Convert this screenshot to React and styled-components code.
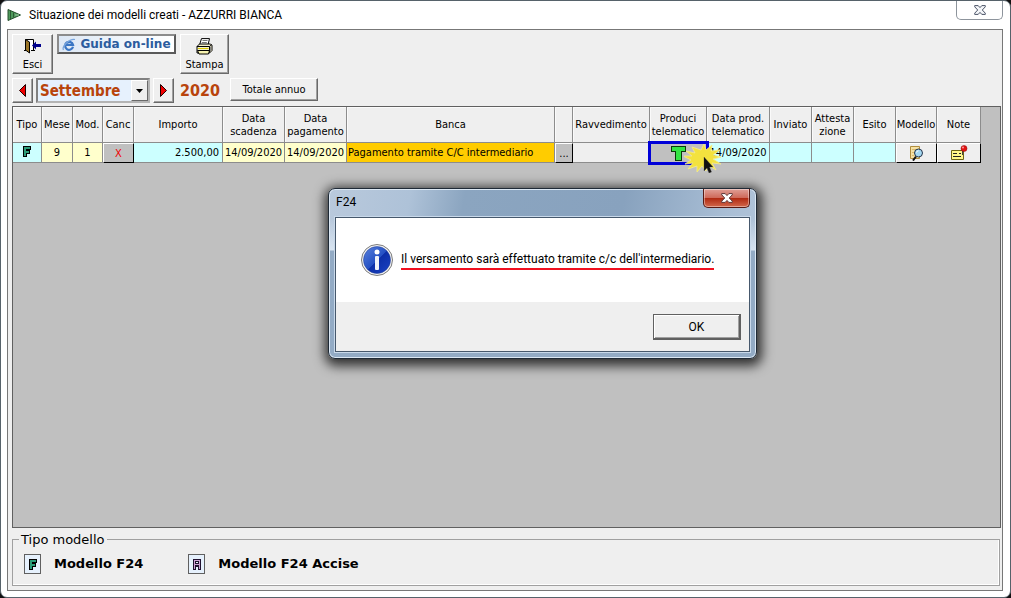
import React, { useState } from 'react';

// Styled Components
import styled, { createGlobalStyle } from 'styled-components';

const tahoma = `'DejaVu Sans Condensed', 'DejaVu Sans', sans-serif`;
const verdana = `'DejaVu Sans', sans-serif`;
const segoe = `Roboto, 'Noto Sans', sans-serif`;

const months = ['Gennaio', 'Febbraio', 'Marzo', 'Aprile', 'Maggio', 'Giugno', 'Luglio',
    'Agosto', 'Settembre', 'Ottobre', 'Novembre', 'Dicembre'];

const columns = [
    { title: 'Tipo', width: 29 },
    { title: 'Mese', width: 31 },
    { title: 'Mod.', width: 30 },
    { title: 'Canc', width: 31 },
    { title: 'Importo', width: 89 },
    { title: 'Data scadenza', width: 62 },
    { title: 'Data pagamento', width: 62 },
    { title: 'Banca', width: 208 },
    { title: '', width: 18 },
    { title: 'Ravvedimento', width: 77 },
    { title: 'Produci telematico', width: 57 },
    { title: 'Data prod. telematico', width: 63 },
    { title: 'Inviato', width: 42 },
    { title: 'Attesta zione', width: 42 },
    { title: 'Esito', width: 42 },
    { title: 'Modello', width: 41 },
    { title: 'Note', width: 44 },
];

const tableWidth = columns.reduce((sum, column) => sum + column.width, 0);

const App = () => {
    const [month, setMonth] = useState('Settembre');
    const [dialogOpen, setDialogOpen] = useState(true);

    return (
        <>
            <GlobalStyle />
            <Window>
                <TitleBar>
                    <AppIcon />
                    <h1>Situazione dei modelli creati - AZZURRI BIANCA</h1>
                    <WindowClose type="button" aria-label="Chiudi finestra">
                        <CloseIcon fill="#f4f6f9" stroke="#4a5366" />
                    </WindowClose>
                </TitleBar>
                <Content>
                    <Toolbar>
                        <ToolButton type="button" $width="41px">
                            <DoorIcon />
                            Esci
                        </ToolButton>
                        <GuideButton type="button">
                            <BrowserIcon />
                            Guida on-line
                        </GuideButton>
                        <ToolButton type="button" $width="49px">
                            <PrinterIcon />
                            Stampa
                        </ToolButton>
                    </Toolbar>
                    <Period>
                        <ArrowButton type="button" aria-label="Mese precedente">
                            <ArrowIcon points="8.5,0.5 8.5,12.5 2.5,6.5" />
                        </ArrowButton>
                        <MonthBox>
                            <select aria-label="Mese" value={month} onChange={e => setMonth(e.target.value)}>
                                {months.map(name => <option key={name}>{name}</option>)}
                            </select>
                            <DropArrow>
                                <svg width="7" height="4"><path d="M0 0h7L3.500 4z" fill="#000" /></svg>
                            </DropArrow>
                        </MonthBox>
                        <ArrowButton type="button" aria-label="Mese successivo">
                            <ArrowIcon points="2.5,0.5 2.5,12.5 8.5,6.5" />
                        </ArrowButton>
                        <Year>2020</Year>
                        <TotalButton type="button">Totale annuo</TotalButton>
                    </Period>
                    <GridPanel>
                        <ModelTable onProduce={() => setDialogOpen(true)} />
                    </GridPanel>
                    <Legend>
                        <legend>Tipo modello</legend>
                        <LegendItem>
                            <LegendBadge><LetterF /></LegendBadge>
                            Modello F24
                        </LegendItem>
                        <LegendItem>
                            <LegendBadge><LetterA /></LegendBadge>
                            Modello F24 Accise
                        </LegendItem>
                    </Legend>
                </Content>
            </Window>
            {dialogOpen && <MessageDialog onClose={() => setDialogOpen(false)} />}
        </>
    );
}

const ModelTable = ({ onProduce }) => {
    return (
        <Table>
            <colgroup>
                {columns.map((column, index) => <col key={index} style={{ width: column.width }} />)}
            </colgroup>
            <thead>
                <tr>
                    {columns.map((column, index) => <th key={index}>{column.title}</th>)}
                </tr>
            </thead>
            <tbody>
                <tr>
                    <Cell $color="#ccffff"><LetterF /></Cell>
                    <Cell $color="#ffffcc">9</Cell>
                    <Cell $color="#ffffcc">1</Cell>
                    <Cell><CellButton type="button" $color="#c0c0c0" $text="#f00000">X</CellButton></Cell>
                    <Cell $color="#ccffff" $align="right">2.500,00</Cell>
                    <Cell $color="#ffffcc">14/09/2020</Cell>
                    <Cell $color="#ffffcc">14/09/2020</Cell>
                    <Cell $color="#ffcc00" $align="left">Pagamento tramite C/C intermediario</Cell>
                    <Cell><CellButton type="button" $color="#c0c0c0">...</CellButton></Cell>
                    <Cell />
                    <Cell $color="#c0c0c0">
                        <ProduceButton type="button" aria-label="Produci telematico" onClick={onProduce}>
                            <LetterT />
                        </ProduceButton>
                        <ClickMark />
                    </Cell>
                    <Cell $color="#ccffff">14/09/2020</Cell>
                    <Cell $color="#ccffff" />
                    <Cell $color="#ccffff" />
                    <Cell $color="#ccffff" />
                    <Cell><CellButton type="button" aria-label="Modello"><PreviewIcon /></CellButton></Cell>
                    <Cell><CellButton type="button" aria-label="Note"><NoteIcon /></CellButton></Cell>
                </tr>
            </tbody>
        </Table>
    );
}

const MessageDialog = ({ onClose }) => {
    return (
        <Dialog role="dialog" aria-labelledby="dialog-title">
            <DialogTitle>
                <h2 id="dialog-title">F24</h2>
                <DialogClose type="button" aria-label="Chiudi" onClick={onClose}>
                    <CloseIcon fill="#fff" stroke="#5c3535" />
                </DialogClose>
            </DialogTitle>
            <DialogBody>
                <Message>
                    <InfoIcon />
                    <p>Il versamento sarà effettuato tramite c/c dell'intermediario.</p>
                </Message>
                <DialogFooter>
                    <OkButton type="button" onClick={onClose}>OK</OkButton>
                </DialogFooter>
            </DialogBody>
        </Dialog>
    );
}

// Icons
const AppIcon = () => (
    <svg width="14" height="12" viewBox="0 0 14 12">
        <path d="M1 .5 13.500 6 1 11.500z" fill="#4f9a5c" stroke="#244f2c" />
        <path d="M3.500 2v8M6.500 3.500v5" stroke="#2a5a33" />
        <path d="M8 6h4" stroke="#9fc9a5" />
    </svg>
);

const CloseIcon = ({ fill, stroke }) => (
    <svg width="12" height="10" viewBox="0 0 12 10">
        <path
            d="M.7.600h3.500L6 2.600 7.800.600h3.500v1.200L8.300 5l3 3.200v1.200H7.800L6 7.400 4.200 9.400H.7V8.200l3-3.200-3-3.200z"
            fill={fill}
            stroke={stroke}
        />
    </svg>
);

const DoorIcon = () => (
    <svg width="17" height="16" viewBox="0 0 17 16">
        <path d="M1.500 12.500v-11h8v11H7" fill="#fff" stroke="#000" />
        <path d="M1.500 1.500l4 2.500v11l-4-3z" fill="#9a7426" stroke="#000" />
        <path d="M0 12.500h2M9 12.500h2" stroke="#000" />
        <path d="M8 7.500l4-4V6h5v3h-5v2.500z" fill="#00008c" />
    </svg>
);

const BrowserIcon = () => (
    <svg width="14" height="13" viewBox="0 0 14 13">
        <path d="M11 8.800A4 4 0 1 1 11 6.800H4" fill="none" stroke="#3a76c4" strokeWidth="2.200" />
        <path d="M1.500 12C-.5 9 7 .5 13 1.500" fill="none" stroke="#78a4dc" strokeWidth="1.200" />
    </svg>
);

const PrinterIcon = () => (
    <svg width="17" height="17" viewBox="0 0 17 17">
        <path d="M5.500.600h8L12 7H3.500z" fill="#fff" stroke="#000" />
        <path d="M6.500 2.500h5M5.800 4.500h5" stroke="#777" />
        <path d="M1 8.500l2.500-2.500h11l1.500 1.500v5L13.500 15H1z" fill="#f3efcc" stroke="#000" />
        <path d="M1 8.500h12.500L16 6.500M13.500 8.500v6" fill="none" stroke="#000" />
        <path d="M2 10.500h10.500" stroke="#d8c800" />
        <path d="M1.500 12.500h12l-1 3.500H3z" fill="#f7f3b0" stroke="#000" />
        <path d="M14.500 9v4" stroke="#888" />
    </svg>
);

const ArrowIcon = ({ points }) => (
    <svg width="11" height="13" viewBox="0 0 11 13">
        <polygon points={points} fill="#f00000" stroke="#200000" />
    </svg>
);

const LetterF = () => (
    <svg width="8" height="11" viewBox="0 0 8 11" shapeRendering="crispEdges">
        <path d="M0 0h8v4H7v4H4v3H0z" fill="#000" />
        <path d="M1 1h6v2H3v2h3v2H3v3H1z" fill="#2a9c78" />
    </svg>
);

const LetterA = () => (
    <svg width="8" height="11" viewBox="0 0 8 11" shapeRendering="crispEdges">
        <path d="M0 0h8v11H5V8H3v3H0z" fill="#201030" />
        <path d="M1 1h6v9H6V6H2v4H1z" fill="#cfa2d6" />
        <path d="M2 2h4v3H2z" fill="#201030" />
        <path d="M3 3h2v1H3z" fill="#e6f1fd" />
    </svg>
);

const LetterT = () => (
    <svg width="15" height="15" viewBox="0 0 15 15" shapeRendering="crispEdges">
        <path d="M0 0h15v6h-4v9H4V6H0z" fill="#0a3a0a" />
        <path d="M1 1h13v4h-4v9H5V5H1z" fill="#33e544" />
    </svg>
);

const PreviewIcon = () => (
    <svg width="15" height="15" viewBox="0 0 15 15">
        <path d="M1.500.500h9v12h-9z" fill="#f6e2a4" stroke="#b08d3e" />
        <path d="M3 3.500h5M3 6.500h2M3 9.500h2" stroke="#dcbb70" />
        <path d="M7 10.500 4 14.500" stroke="#111" strokeWidth="2" />
        <circle cx="9.500" cy="7" r="4" fill="#a4d8f2" stroke="#25344a" />
        <path d="M7.500 6.500A2 2 0 0 1 9.500 4.800" fill="none" stroke="#fff" />
    </svg>
);

const NoteIcon = () => (
    <svg width="18" height="16" viewBox="0 0 18 16">
        <path d="M1.500 5.500h12v9h-12z" fill="#fff78a" stroke="#6e6514" />
        <path d="M3 8.500h4M3 11.500h8M9 8.500h2" stroke="#222" />
        <path d="M12.500 5v5" stroke="#444" />
        <circle cx="14" cy="3.500" r="3" fill="#e21414" stroke="#8c0808" strokeWidth=".5" />
        <circle cx="13" cy="2.500" r="1" fill="#ff9c9c" />
    </svg>
);

const InfoIcon = () => (
    <svg width="32" height="32" viewBox="0 0 32 32">
        <defs>
            <linearGradient id="info" x1="0" y1="0" x2="1" y2="1">
                <stop offset="0" stopColor="#5b83dc" />
                <stop offset=".5" stopColor="#2450c4" />
                <stop offset=".52" stopColor="#0d2fa8" />
                <stop offset="1" stopColor="#1b44c4" />
            </linearGradient>
        </defs>
        <circle cx="16" cy="16" r="15.500" fill="#f2f2f2" stroke="#7c7c7c" />
        <circle cx="16" cy="16" r="13.500" fill="url(#info)" stroke="#1c3a94" strokeWidth=".5" />
        <circle cx="16" cy="8" r="2.500" fill="#fff" />
        <rect x="14" y="12" width="4" height="14" rx="1" fill="#f0f3fa" />
    </svg>
);

const ClickMark = () => (
    <Burst width="38" height="29" viewBox="0 0 38 29" aria-hidden="true">
        <path
            d="M17 6 20 0l2 6 6-5-1 6 9-1-7 5 8 2-8 2 8 5-9-1 4 7-8-5-2 6-4-5-5 6 0-6-9 3 5-6-8 1 6-4-8-4 9 0-6-5 9 2-3-6z"
            fill="#f3e23e"
            stroke="#f6ec8c"
            strokeWidth=".8"
        />
        <path d="M20 13v14l3-3 2 5 2.500-1-2-5H29z" fill="#111" stroke="#444" strokeWidth=".3" />
    </Burst>
);

const GlobalStyle = createGlobalStyle`
  * {
    box-sizing: border-box;
  }

  body {
    margin: 0;
    background: #111;
    color: #000;
    font: 11px/13px ${tahoma};
  }

  button {
    margin: 0;
    padding: 0;
    color: inherit;
    font: inherit;
  }

  svg {
    flex: none;
  }
`;

const Window = styled.main`
  display: flex;
  flex-direction: column;
  min-height: 100vh;
  padding: 0 7px 6px 6px;
  border: 1px solid #56626a;
  border-radius: 7px;
  background: #fff;
`;

const TitleBar = styled.header`
  display: flex;
  align-items: center;
  gap: 8px;
  height: 28px;

  h1 {
    flex: 1;
    margin: 0;
    font: 12px/16px ${segoe};
  }
`;

const WindowClose = styled.button`
  display: flex;
  align-self: flex-start;
  align-items: center;
  justify-content: center;
  width: 47px;
  height: 19px;
  border: 1px solid #8d949c;
  border-top: 0;
  border-radius: 0 0 5px 5px;
  background: #fff;
`;

const Content = styled.section`
  display: flex;
  flex: 1;
  flex-direction: column;
  padding: 4px 1px 4px 4px;
  border: 1px solid #777;
  background: #efefef;
`;

const Raised = styled.button`
  border: 1px solid;
  border-color: #fff #696969 #696969 #fff;
  background: #efefef;
  box-shadow: inset -1px -1px #a0a0a0;
`;

const Toolbar = styled.div`
  display: flex;
  align-items: flex-start;
  gap: 4px;
`;

const ToolButton = styled(Raised)`
  display: flex;
  flex-direction: column;
  align-items: center;
  justify-content: space-between;
  width: ${props => props.$width};
  height: 40px;
  padding: 3px 0 2px;
`;

const GuideButton = styled.button`
  display: flex;
  align-items: center;
  justify-content: center;
  gap: 4px;
  width: 119px;
  height: 20px;
  border: 2px solid;
  border-color: #8c8c8c #5a5a5a #5a5a5a #8c8c8c;
  background: linear-gradient(90deg, #dde8f5, #fff);
  color: #2c5c9e;
  font: bold 12px/14px ${verdana};
`;

const Period = styled.div`
  display: flex;
  align-items: flex-start;
  gap: 3px;
  padding: 4px 0 3px;
`;

const ArrowButton = styled(Raised)`
  display: flex;
  align-items: center;
  justify-content: center;
  width: 21px;
  height: 25px;
`;

const MonthBox = styled.div`
  position: relative;
  width: 114px;
  height: 25px;
  border: 2px solid;
  border-color: #808080 #b4b4b4 #b4b4b4 #808080;

  select {
    width: 100%;
    height: 100%;
    padding: 0 20px 0 2px;
    border: 0;
    appearance: none;
    background: #e6f1fd;
    color: #b8440c;
    font: bold 15px/20px ${tahoma};
  }
`;

const DropArrow = styled.span`
  position: absolute;
  top: 0;
  right: 0;
  bottom: 0;
  display: flex;
  align-items: center;
  justify-content: center;
  width: 17px;
  border: 1px solid;
  border-color: #fff #696969 #696969 #fff;
  background: #efefef;
  pointer-events: none;
`;

const Year = styled.strong`
  padding: 3px 7px 0 3px;
  color: #b8440c;
  font: bold 16px/20px ${tahoma};
`;

const TotalButton = styled(Raised)`
  width: 88px;
  height: 23px;
`;

const GridPanel = styled.div`
  flex: 1;
  border: 1px solid #606060;
  background: #c0c0c0;
`;

const Table = styled.table`
  width: ${tableWidth}px;
  table-layout: fixed;
  border-spacing: 0;

  th {
    height: 36px;
    padding: 0;
    border-right: 1px solid #8c8c8c;
    border-bottom: 1px solid #8c8c8c;
    background: #efefef;
    box-shadow: inset 1px 1px #fafafa;
    font-weight: normal;
  }
`;

const Cell = styled.td`
  position: relative;
  height: 20px;
  padding: 0 ${props => (props.$align === 'right' ? '3px' : '1px')};
  border-right: 1px solid #8c8c8c;
  border-bottom: 1px solid #8c8c8c;
  background: ${props => props.$color || '#efefef'};
  text-align: ${props => props.$align || 'center'};
  white-space: nowrap;

  > svg {
    vertical-align: top;
  }
`;

const CellButton = styled.button`
  position: absolute;
  inset: 0 -1px -1px 0;
  display: flex;
  align-items: center;
  justify-content: center;
  border: 1px solid;
  border-color: #fff #000 #000 #fff;
  background: ${props => props.$color || '#efefef'};
  color: ${props => props.$text || '#000'};
`;

const ProduceButton = styled.button`
  position: absolute;
  inset: -2px -3px -3px -2px;
  z-index: 1;
  display: flex;
  align-items: center;
  justify-content: center;
  border: 3px solid #0000d8;
  background: #c0c0c0;
`;

const Burst = styled.svg`
  position: absolute;
  top: 1px;
  right: -16px;
  z-index: 2;
  pointer-events: none;
`;

const Legend = styled.fieldset`
  display: flex;
  gap: 45px;
  min-height: 54px;
  margin: 4px 1px 0 0;
  padding: 7px 11px;
  border: 1px solid #a0a0a0;
  box-shadow: inset -1px -1px #fff;

  legend {
    padding: 0 2px;
    margin-left: -5px;
    font: 13px/15px ${verdana};
  }
`;

const LegendItem = styled.div`
  display: flex;
  align-items: center;
  gap: 13px;
  height: 20px;
  font: bold 13px/16px ${verdana};
`;

const LegendBadge = styled.span`
  display: flex;
  align-items: center;
  justify-content: center;
  width: 17px;
  height: 20px;
  border: 1px solid #606060;
  background: #e6f1fd;
`;

const Dialog = styled.div`
  position: absolute;
  top: 188px;
  left: 328px;
  z-index: 10;
  width: 429px;
  padding: 0 6px 6px;
  border: 1px solid #1f2a36;
  border-radius: 7px;
  background:
    linear-gradient(transparent 30px, rgba(230, 240, 250, 0.7) 61px, #93abc5 62px),
    linear-gradient(100deg, #b9c9dc 0%, #aec2d8 18%, #8ba5c0 30%, #88a2be 65%, #a9bed5 88%, #b4c6da 100%);
  box-shadow: inset 0 0 0 1px #dbe7f3, 1px 3px 12px 4px rgba(0, 0, 0, 0.75);
`;

const DialogTitle = styled.header`
  display: flex;
  align-items: flex-start;
  justify-content: space-between;
  height: 28px;

  h2 {
    margin: 0;
    padding: 5px 1px;
    font: 12px/16px ${segoe};
  }
`;

const DialogClose = styled.button`
  display: flex;
  align-items: center;
  justify-content: center;
  width: 47px;
  height: 19px;
  border: 1px solid #571a14;
  border-top: 0;
  border-radius: 0 0 5px 5px;
  background: linear-gradient(#e0a097, #cf6a5a 48%, #b02a12 52%, #d2684c);
  box-shadow: inset 0 0 0 1px rgba(255, 255, 255, 0.4);
`;

const DialogBody = styled.div`
  border: 1px solid #46586c;
  background: #fff;
  box-shadow: 0 0 0 1px #c9d9ea;
`;

const Message = styled.div`
  display: flex;
  align-items: center;
  gap: 8px;
  height: 84px;
  padding: 0 25px;

  p {
    margin: 0;
    border-bottom: 2px solid #f01020;
    font: 12px/18px ${segoe};
    white-space: nowrap;
  }
`;

const DialogFooter = styled.footer`
  display: flex;
  justify-content: flex-end;
  padding: 12px 8px 11px;
  background: #efefef;
`;

const OkButton = styled.button`
  width: 88px;
  height: 26px;
  border: 1px solid #606060;
  border-right-width: 2px;
  border-bottom-width: 2px;
  background: #efefef;
  box-shadow: inset 1px 1px #fff, inset -1px -1px #a0a0a0;
  font: 12px/16px ${segoe};
`;

export default App;
